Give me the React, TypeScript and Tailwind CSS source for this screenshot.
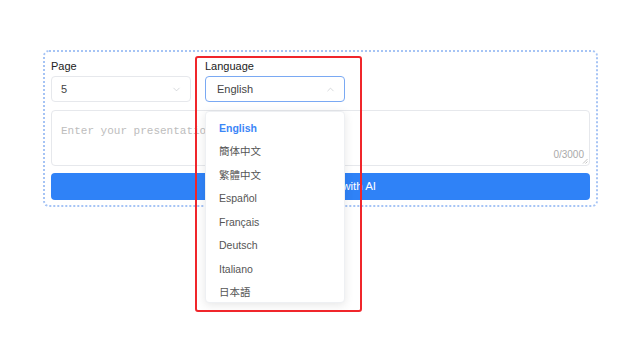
import { ChevronDown, ChevronUp } from "lucide-react";

const languages = ["English", "簡体中文", "繁體中文", "Español", "Français", "Deutsch", "Italiano", "日本語"];

export default function App() {
  return (
    <div
      className="relative w-[640px] h-[360px] bg-white pt-[50px] pl-[43px] text-[#333]"
      style={{ fontFamily: '"Liberation Sans", "Noto Sans CJK SC", sans-serif' }}
    >
      {/* Form card */}
      <div className="w-[555px] border-2 border-dotted border-[#a6c4f5] rounded-[6px] px-[6px] pt-[7px] pb-[5px]">
        <div className="flex gap-[14px]">
          <div className="w-[140px]">
            <div className="text-[11px] leading-[14px] text-[#222]">Page</div>
            <div className="mt-[3px] h-[26px] border border-[#e6e8ec] rounded-[4px] flex items-center justify-between pl-[9px] pr-[8px]">
              <span className="text-[11px] text-[#444]">5</span>
              <ChevronDown size={11} strokeWidth={1.5} className="text-[#c4c7cc]" />
            </div>
          </div>

          <div className="w-[140px] relative">
            <div className="text-[11px] leading-[14px] text-[#222]">Language</div>
            <div className="mt-[3px] h-[26px] border border-[#7aa9f3] rounded-[4px] flex items-center justify-between pl-[11px] pr-[8px]">
              <span className="text-[11px] text-[#444]">English</span>
              <ChevronUp size={11} strokeWidth={1.5} className="text-[#c4c7cc]" />
            </div>

            {/* Dropdown */}
            <div className="absolute left-0 top-[52px] z-20 w-[140px] h-[192px] bg-white rounded-[4px] border border-[#eef0f3] shadow-[0_2px_10px_rgba(0,0,0,0.10)] pt-[5px] overflow-hidden">
              {languages.map((lang, i) => (
                <div
                  key={lang}
                  className={
                    i === 0
                      ? "h-[23.5px] flex items-center pl-[13px] text-[10.5px] font-bold text-[#3b86f7]"
                      : "h-[23.5px] flex items-center pl-[13px] text-[10.5px] text-[#555]"
                  }
                >
                  {lang}
                </div>
              ))}
            </div>
          </div>
        </div>

        <div className="relative mt-[8px] h-[56px] border border-[#e6e8ec] rounded-[4px] px-[9px] py-[6px]">
          <span
            className="text-[11px] text-[#bdbdbd]"
            style={{ fontFamily: '"Liberation Mono", "DejaVu Sans Mono", monospace' }}
          >
            Enter your presentation topic or content
          </span>
          <span className="absolute right-[5px] bottom-[3px] text-[10px] text-[#aaa]">0/3000</span>
          <svg className="absolute right-[1px] bottom-[1px]" width="6" height="6" viewBox="0 0 6 6">
            <path d="M5.5 1 L1 5.5 M5.5 3.5 L3.5 5.5" stroke="#b5b5b5" strokeWidth="0.8" />
          </svg>
        </div>

        <button className="mt-[7px] w-full h-[27px] rounded-[4px] bg-[#2f82f7] text-white text-[11.5px] flex items-center justify-center pl-[26px]">
          Generate with AI
        </button>
      </div>

      {/* Highlight frame */}
      <div className="absolute left-[195px] top-[56px] w-[167px] h-[256px] border-2 border-[#f0262b] rounded-[3px] z-30 pointer-events-none" />
    </div>
  );
}
